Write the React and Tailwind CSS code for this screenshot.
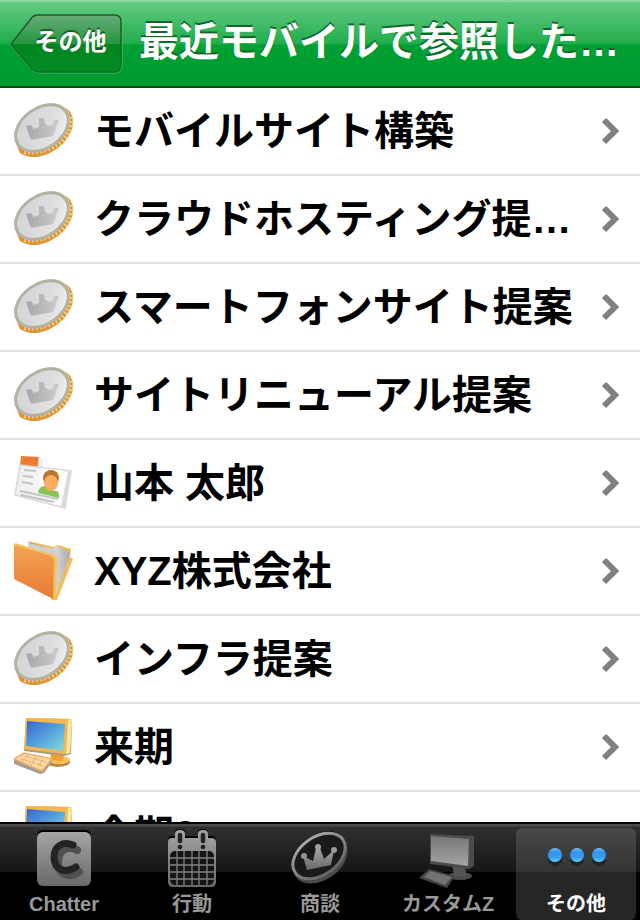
import { useState } from "react";

const records = [
	{ id: 1, name: "モバイルサイト構築", type: "coin" },
	{ id: 2, name: "クラウドホスティング提…", type: "coin" },
	{ id: 3, name: "スマートフォンサイト提案", type: "coin" },
	{ id: 4, name: "サイトリニューアル提案", type: "coin" },
	{ id: 5, name: "山本 太郎", type: "contact" },
	{ id: 6, name: "XYZ株式会社", type: "folder" },
	{ id: 7, name: "インフラ提案", type: "coin" },
	{ id: 8, name: "来期", type: "computer" },
	{ id: 9, name: "今期2", type: "computer" },
];

const tabs = [
	{ id: "chatter", label: "Chatter", icon: ChatterIcon },
	{ id: "event", label: "行動", icon: CalendarIcon },
	{ id: "deal", label: "商談", icon: CrownIcon },
	{ id: "custom", label: "カスタムZ", icon: MonitorIcon },
	{ id: "more", label: "その他", icon: DotsIcon },
];

function Coin() {
	return (
		<svg viewBox="0 0 60 56" className="w-[60px] h-[56px]">
			<path d="M52 5 Q61 11 58 26 Q53 41 36 50 Q18 58 6 50 L1 38 L50 6 Z" fill="#dc9230" />
			<path d="M56 14 Q58 25 49 36 Q33 51 8 48" fill="none" stroke="#f5ca7a" strokeWidth="6" strokeDasharray="2 2" />
			<g transform="rotate(-35 28 25)">
				<ellipse cx="29" cy="25" rx="30" ry="21" fill="#ecd590" />
				<ellipse cx="28" cy="25" rx="29" ry="20" fill="url(#coinFace)" stroke="#b3b2a4" strokeWidth="3" />
			</g>
			<path
				d="M17 37 L12 23 L17 22 L20 26 L25 24 L25 15 L30 15 L31 21 L36 23 L39 22 L40 17 L45 17 L39 33 Z"
				fill="url(#coinCrown)"
			/>
		</svg>
	);
}

function Contact() {
	return (
		<svg viewBox="0 0 60 56" className="w-[60px] h-[56px]">
			<path d="M7 1 L25 2 L26 12 L6 11 Z" fill="#ee7b35" />
			<path d="M25 2 L28 5 L27 13 L24 12 Z" fill="#fff" stroke="#ddd" />
			<path d="M6 10 L57 16 L51 53 L1 40 Z" fill="url(#paper)" stroke="#d8d8d8" strokeWidth="1.5" />
			<path d="M54 17 L57 16 L51 53 L47 51 Z" fill="#dadada" />
			<path d="M28 13 L51 16 L47 45 L24 40 Z" fill="#fff" />
			<path d="M10 15 L22 16 M9 21 L19 22 M8 27 L19 29 M6 36 L44 44 M7 40 L40 47" stroke="#c4c4c4" strokeWidth="1.8" fill="none" />
			<path d="M24 38 Q25 30 32 31 L40 36 Q45 35 45 41 L45 43 Z" fill="#86c552" />
			<circle cx="37" cy="23" r="8" fill="#b87828" />
			<ellipse cx="37" cy="28" rx="7" ry="8" fill="#f8ad63" />
		</svg>
	);
}

function Folder() {
	return (
		<svg viewBox="0 0 60 60" className="w-[60px] h-[60px]">
			<path d="M14 0 L40 6 L44 4 L57 8 L56 16 L59 18 L43 59 L38 59 Z" fill="#f3bc55" />
			<path d="M14 1 L39 8 L43 5 L56 11 L54 20 L42 54 L39 50 L40 14 Z" fill="url(#silver)" />
			<path d="M14 2 L40 9 L43 16 L14 9 Z" fill="#d0d0d0" />
			<path d="M1 2 L37 13 Q43 15 43 18 L42 59 L38 58 L38 17 L0 4 Z" fill="#f5c256" />
			<path d="M0 4 L37 15 L40 19 L39 58 L0 38 Z" fill="url(#folderFace)" />
		</svg>
	);
}

function Computer() {
	return (
		<svg viewBox="0 0 60 60" className="w-[60px] h-[60px]">
			<ellipse cx="44" cy="45" rx="12" ry="5" fill="#b58b47" />
			<ellipse cx="45" cy="43" rx="11" ry="4" fill="#f8c062" />
			<path d="M36 32 L50 34 L49 44 L37 43 Z" fill="#f0a136" />
			<path d="M12 1 L58 2 L57 37 L50 39 L10 34 Z" fill="#a89b82" />
			<path d="M12 1 L58 2 L56 36 L50 37 L10 32 Z" fill="#f4b64d" />
			<path d="M54 3 L58 2 L56 36 L52 37 Z" fill="#fde5a6" />
			<path d="M13 4 L51 7 L49 34 L12 29 Z" fill="url(#screen)" />
			<path d="M0 43 L10 36 L38 42 L38 45 L30 56 L26 57 L0 47 Z" fill="#a59d94" />
			<path d="M0 42 L10 36 L38 42 L28 54 Z" fill="#fbd9a8" stroke="#f0ad62" strokeWidth="1.5" />
			<path d="M7 42 L29 49 M11 39 L32 45 M14 38 L8 45 M22 40 L17 48 M29 42 L24 50" stroke="#e8a35c" strokeDasharray="3 1" fill="none" />
		</svg>
	);
}

const rowIcons = { coin: Coin, contact: Contact, folder: Folder, computer: Computer };

function ChatterIcon() {
	return (
		<svg viewBox="0 0 60 60" className="w-[60px] h-[60px]">
			<rect x="3" y="2" width="54" height="54" rx="6" fill="#000" />
			<rect x="3" y="4" width="54" height="54" rx="6" fill="url(#tabGray)" />
			<path d="M43 22 C34 17 24 22 24 34 C24 46 35 51 45 44" fill="none" stroke="#505050" strokeWidth="8" strokeLinecap="round" />
			<path d="M39 17 C29 13 20 18 20 29 C20 42 31 46 42 39" fill="none" stroke="#232323" strokeWidth="7" strokeLinecap="round" />
		</svg>
	);
}

function CalendarIcon() {
	return (
		<svg viewBox="0 0 60 60" className="w-[60px] h-[60px]">
			<path d="M10 8 H13 V4 Q13 1 18 1 Q23 1 23 4 V8 H36 V4 Q36 1 41 1 Q46 1 46 4 V8 H49 Q54 8 54 13 V53 Q54 58 49 58 H11 Q6 58 6 53 V13 Q6 8 10 8 Z" fill="#000" />
			<path d="M10 10 H13 V6 Q13 2 18 2 Q23 2 23 6 V10 H36 V6 Q36 2 41 2 Q46 2 46 6 V10 H49 Q54 10 54 14 V54 Q54 59 49 59 H11 Q6 59 6 54 V14 Q6 10 10 10 Z" fill="url(#tabGray)" />
			<path d="M18 7 V13 M41 7 V13" stroke="#222" strokeWidth="4.5" strokeLinecap="round" />
			<circle cx="18" cy="19" r="2.3" fill="#222" />
			<circle cx="41" cy="19" r="2.3" fill="#222" />
			<rect x="8" y="23" width="44" height="34" rx="5" fill="#151515" />
			<path d="M15 23 V57 M22 23 V57 M30 23 V57 M37 23 V57 M45 23 V57 M8 30 H52 M8 37 H52 M8 44 H52 M8 51 H52" stroke="#828282" strokeWidth="1.3" />
		</svg>
	);
}

function CrownIcon() {
	return (
		<svg viewBox="0 0 60 60" className="w-[60px] h-[60px]">
			<g transform="rotate(-35 29 28)">
				<ellipse cx="29" cy="26" rx="30" ry="19" fill="#080808" />
				<ellipse cx="28" cy="32" rx="30" ry="20" fill="#4a4a4a" />
				<ellipse cx="29" cy="28" rx="29" ry="19" fill="#1a1a1a" stroke="url(#tabGray)" strokeWidth="3" />
			</g>
			<path d="M17 42 L13 28 L23 33 L26 20 L30 20 L34 31 L44 22 L41 37 Z" fill="url(#tabGray)" />
			<circle cx="14" cy="28" r="3" fill="#929292" />
			<circle cx="28" cy="19" r="3" fill="#a0a0a0" />
			<circle cx="44" cy="22" r="3" fill="#999" />
		</svg>
	);
}

function MonitorIcon() {
	return (
		<svg viewBox="0 0 60 60" className="w-[60px] h-[60px]">
			<ellipse cx="42" cy="48" rx="12" ry="4" fill="#4c4c4c" />
			<path d="M34 35 H47 L48 48 H36 Z" fill="#555" />
			<path d="M12 6 L56 8 V38 L51 41 L12 36 Z" fill="#4b4b4b" />
			<path d="M13 8 L51 11 L50 38 L13 33 Z" fill="url(#screenGray)" />
			<path d="M11 41 L37 48 L29 60 L1 50 Z" fill="#454545" />
			<path d="M12 43 L34 49 L27 57 L6 49 Z" fill="#727272" />
		</svg>
	);
}

function DotsIcon() {
	return (
		<svg viewBox="0 0 60 60" className="w-[60px] h-[60px] overflow-visible">
			{[9, 31, 53].map(x => (
				<g key={x}>
					<circle cx={x} cy="31" r="7" fill="#242424" />
					<circle cx={x} cy="27" r="7" fill="url(#dot)" />
				</g>
			))}
		</svg>
	);
}

// gradients shared by all the icons
function Gradients() {
	return (
		<svg className="absolute w-0 h-0" aria-hidden="true">
			<defs>
				<linearGradient id="coinFace" x1="0" y1="0" x2="1" y2="1">
					<stop offset="0" stopColor="#d0d0d2" />
					<stop offset="0.6" stopColor="#dedee0" />
					<stop offset="1" stopColor="#f4f4f4" />
				</linearGradient>
				<linearGradient id="coinCrown">
					<stop offset="0" stopColor="#a7a8aa" />
					<stop offset="1" stopColor="#cbcccd" />
				</linearGradient>
				<linearGradient id="paper">
					<stop offset="0" stopColor="#eeeeee" />
					<stop offset="1" stopColor="#ffffff" />
				</linearGradient>
				<linearGradient id="silver">
					<stop offset="0" stopColor="#999" />
					<stop offset="0.6" stopColor="#ddd" />
					<stop offset="1" stopColor="#aaa" />
				</linearGradient>
				<linearGradient id="folderFace" x1="0" y1="0" x2="0" y2="1">
					<stop offset="0" stopColor="#f3a452" />
					<stop offset="1" stopColor="#e87a37" />
				</linearGradient>
				<linearGradient id="screen" x1="0" y1="0" x2="1" y2="1">
					<stop offset="0" stopColor="#3567cf" />
					<stop offset="0.5" stopColor="#55a1dc" />
					<stop offset="1" stopColor="#82e1dc" />
				</linearGradient>
				<linearGradient id="tabGray" x1="0" y1="0" x2="0" y2="1">
					<stop offset="0" stopColor="#a5a5a5" />
					<stop offset="1" stopColor="#686868" />
				</linearGradient>
				<linearGradient id="screenGray" x1="0" y1="0" x2="0" y2="1">
					<stop offset="0" stopColor="#777" />
					<stop offset="1" stopColor="#a4a4a4" />
				</linearGradient>
				<linearGradient id="dot" x1="0" y1="0" x2="0" y2="1">
					<stop offset="0" stopColor="#73bdf4" />
					<stop offset="0.3" stopColor="#3493ee" />
					<stop offset="0.7" stopColor="#389ff4" />
					<stop offset="1" stopColor="#65d7fd" />
				</linearGradient>
				<linearGradient id="back" x1="0" y1="0" x2="0" y2="1">
					<stop offset="0" stopColor="#68ad78" />
					<stop offset="0.5" stopColor="#25953f" />
					<stop offset="0.51" stopColor="#04861f" />
					<stop offset="1" stopColor="#008b22" />
				</linearGradient>
				<linearGradient id="backEdge" x1="0" y1="0" x2="0" y2="1">
					<stop offset="0" stopColor="#25542f" />
					<stop offset="1" stopColor="#087325" />
				</linearGradient>
			</defs>
		</svg>
	);
}

export default function App() {
	const [tab, setTab] = useState("more");

	return (
		<div className="flex flex-col h-screen overflow-hidden bg-white font-['Liberation_Sans','Noto_Sans_CJK_JP',sans-serif]">
			<Gradients />
			<header className="flex items-center shrink-0 h-[88px] pl-[10px] pr-4 gap-4 border-t-2 border-t-[#8dd5a4] border-b-2 border-b-[#03491a] bg-[linear-gradient(#65cb84_0%,#20ad4b_50%,#00a034_51%,#009a2d_100%)]">
				<button type="button" className="relative shrink-0 w-[113px] h-[60px] pl-2">
					<svg viewBox="0 0 113 60" className="absolute inset-0 w-full h-full" aria-hidden="true">
						<path d="M26 2 H105 Q112 2 112 9 V52 Q112 59 105 59 H29 Q24 59 20 54 L1 31 L20 7 Q23 2 28 2 Z" fill="none" stroke="#58bb75" />
						<path d="M28 1 H105 Q111 1 111 8 V51 Q111 58 105 58 H29 Q24 58 20 53 L1 30 L20 6 Q23 1 28 1 Z" fill="url(#back)" stroke="url(#backEdge)" strokeWidth="1.5" />
					</svg>
					<span className="relative block pb-1 text-2xl leading-8 font-bold text-white [text-shadow:0_-2px_0_#14602a]">その他</span>
				</button>
				<h1 className="flex-1 min-w-0 pb-1 whitespace-nowrap text-[40px] leading-[56px] font-bold text-white [text-shadow:0_-2px_0_#13652c]">
					最近モバイルで参照した…
				</h1>
			</header>

			<ul className="flex-1 min-h-0 overflow-y-auto [scrollbar-width:none]">
				{records.map(r => {
					const Icon = rowIcons[r.type];
					return (
						<li key={r.id} className="border-b-2 border-[#e0e0e0]">
							<a href="#" className="flex items-center h-[86px] pl-[14px] pr-5">
								<Icon />
								<span className="flex-1 min-w-0 pl-5 whitespace-nowrap text-[40px] leading-[60px] font-bold text-black">
									{r.name}
								</span>
								<svg viewBox="0 0 20 28" className="shrink-0 w-5 h-7">
									<path d="M4 3 L15 14 L4 25" fill="none" stroke="#808080" strokeWidth="6" />
								</svg>
							</a>
						</li>
					);
				})}
			</ul>

			<nav className="grid grid-cols-5 shrink-0 h-[98px] border-t-2 border-black bg-[linear-gradient(#4b4b4b_0px,#4b4b4b_2px,#303030_3px,#161616_48px,#000_48px)]">
				{tabs.map(t => (
					<button
						key={t.id}
						type="button"
						onClick={() => setTab(t.id)}
						className={
							tab === t.id
								? "flex flex-col items-center mt-1 mb-1 mx-1 rounded-md text-white bg-[linear-gradient(#484848,#343434_44px,#262626_44px)]"
								: "flex flex-col items-center mt-1 mb-1 mx-1 text-[#999]"
						}
					>
						<t.icon />
						<span className="whitespace-nowrap text-xl leading-8 font-bold">{t.label}</span>
					</button>
				))}
			</nav>
		</div>
	);
}
